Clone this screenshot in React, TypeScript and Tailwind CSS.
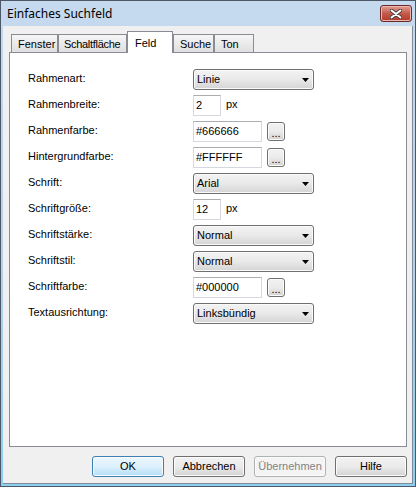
const font = { fontFamily: '"Liberation Sans", Arial, sans-serif' }

type Row =
  | { label: string; kind: 'select'; value: string }
  | { label: string; kind: 'px'; value: string }
  | { label: string; kind: 'color'; value: string }

const rows: Row[] = [
  { label: 'Rahmenart:', kind: 'select', value: 'Linie' },
  { label: 'Rahmenbreite:', kind: 'px', value: '2' },
  { label: 'Rahmenfarbe:', kind: 'color', value: '#666666' },
  { label: 'Hintergrundfarbe:', kind: 'color', value: '#FFFFFF' },
  { label: 'Schrift:', kind: 'select', value: 'Arial' },
  { label: 'Schriftgröße:', kind: 'px', value: '12' },
  { label: 'Schriftstärke:', kind: 'select', value: 'Normal' },
  { label: 'Schriftstil:', kind: 'select', value: 'Normal' },
  { label: 'Schriftfarbe:', kind: 'color', value: '#000000' },
  { label: 'Textausrichtung:', kind: 'select', value: 'Linksbündig' },
]

function Select({ value }: { value: string }) {
  return (
    <div className="flex h-[21px] w-[121px] items-center justify-between rounded-[3px] border border-[#707070] bg-linear-to-b from-[#f3f3f3] via-[#e9e9e9] to-[#d4d4d4] pl-[3px] pr-[4px] shadow-[inset_0_0_0_1px_#fafafa]">
      <span>{value}</span>
      <svg width="7" height="4" viewBox="0 0 7 4">
        <path d="M0 0h7L3.5 4z" fill="#000" />
      </svg>
    </div>
  )
}

function TextBox({ value, width }: { value: string; width: string }) {
  return (
    <div
      className={`flex h-[21px] items-center border border-[#d5d8de] border-t-[#abadb3] bg-white pl-[2px] ${width}`}
    >
      {value}
    </div>
  )
}

function Ellipsis() {
  return (
    <div className="ml-[5px] mt-px flex h-[19px] w-[18px] items-end justify-center rounded-[3px] border border-[#707070] bg-linear-to-b from-[#f2f2f2] via-[#ebebeb] to-[#d2d2d2] pb-[1px] text-[11px] leading-[11px] shadow-[inset_0_0_0_1px_#fbfbfb]">
      ...
    </div>
  )
}

function Tab({ label, width, active, tight }: { label: string; width: string; active?: boolean; tight?: boolean }) {
  if (active) {
    return (
      <div
        className={`relative z-10 -mb-px flex h-[22px] items-start border border-b-0 border-[#898c95] bg-white pl-[7px] pt-[3px] ${width}`}
      >
        {label}
      </div>
    )
  }
  return (
    <div
      className={`flex h-[18px] items-center whitespace-nowrap border border-b-0 border-[#898c95] bg-linear-to-b from-[#f5f5f5] to-[#e0e0e0] pt-[1px] ${
        tight ? 'pl-[5px] tracking-[-0.3px]' : 'pl-[6px]'
      } ${width}`}
    >
      {label}
    </div>
  )
}

function Button({ label, kind }: { label: string; kind?: 'default' | 'disabled' }) {
  const look =
    kind === 'default'
      ? 'border-[#3c7fb1] from-[#ecf7fd] via-[#dcf0fc] to-[#b4def6] text-black'
      : kind === 'disabled'
        ? 'border-[#adb2b5] from-[#f4f4f4] to-[#f4f4f4] text-[#838383]'
        : 'border-[#707070] from-[#f2f2f2] via-[#ebebeb] to-[#d3d3d3] text-black'
  return (
    <div
      className={`flex h-[21px] w-[72px] items-center justify-center rounded-[3px] border bg-linear-to-b shadow-[inset_0_0_0_1px_#fbfbfb] ${look}`}
    >
      {label}
    </div>
  )
}

export default function App() {
  return (
    <div
      className="flex h-[487px] w-[416px] flex-col border border-[#4c5867] bg-linear-to-b from-[#c6daef] via-[#b9d1ea] to-[#8ccfee] pb-[2px] pl-[2px] pr-[2px] text-[11px] text-black"
      style={font}
    >
      <div className="flex h-[25px] shrink-0 items-start justify-between">
        <div
          className="pl-[4px] pt-[4px] text-[12px] leading-[17px]"
          style={{ fontFamily: '"Noto Sans", "Open Sans", sans-serif' }}
        >
          Einfaches Suchfeld
        </div>
        <div className="mr-[1px] mt-[4px] flex h-[17px] w-[32px] items-center justify-center rounded-[3px] border border-[#6b2a2a] bg-linear-to-b from-[#e0a197] via-[#c45a4b] to-[#b5382a] shadow-[inset_0_0_0_1px_#eab6ad]">
          <svg width="12" height="10" viewBox="0 0 12 10">
            <path d="M1.5 1.5l9 7M10.5 1.5l-9 7" stroke="#3a3a3a" strokeWidth="3.6" strokeLinecap="round" />
            <path d="M1.5 1.5l9 7M10.5 1.5l-9 7" stroke="#fff" strokeWidth="2" strokeLinecap="round" />
          </svg>
        </div>
      </div>

      <div className="flex flex-1 flex-col border-b border-r border-[#7f8c99] bg-[#f0f0f0] pl-[6px] pr-[5px] pt-[5px]">
        <div className="flex h-[21px] items-end pl-[2px]">
          <Tab label="Fenster" width="w-[47px]" />
          <Tab label="Schaltfläche" width="w-[69px]" tight />
          <Tab label="Feld" width="w-[46px]" active />
          <Tab label="Suche" width="w-[41px]" />
          <Tab label="Ton" width="w-[40px]" />
        </div>

        <div className="flex h-[395px] flex-col border border-[#898c95] bg-white pl-[18px] pt-[16px]">
          {rows.map((r) => (
            <div key={r.label} className="flex h-[26px] items-start">
              <div className="w-[165px] pt-[1px] leading-[16px]">{r.label}</div>
              {r.kind === 'select' && <Select value={r.value} />}
              {r.kind === 'px' && (
                <>
                  <TextBox value={r.value} width="w-[28px]" />
                  <div className="ml-[5px] pt-[1px] leading-[16px]">px</div>
                </>
              )}
              {r.kind === 'color' && (
                <>
                  <TextBox value={r.value} width="w-[69px]" />
                  <Ellipsis />
                </>
              )}
            </div>
          ))}
        </div>

        <div className="mt-[9px] flex justify-end gap-[9px]">
          <Button label="OK" kind="default" />
          <Button label="Abbrechen" />
          <Button label="Übernehmen" kind="disabled" />
          <Button label="Hilfe" />
        </div>
      </div>
    </div>
  )
}
